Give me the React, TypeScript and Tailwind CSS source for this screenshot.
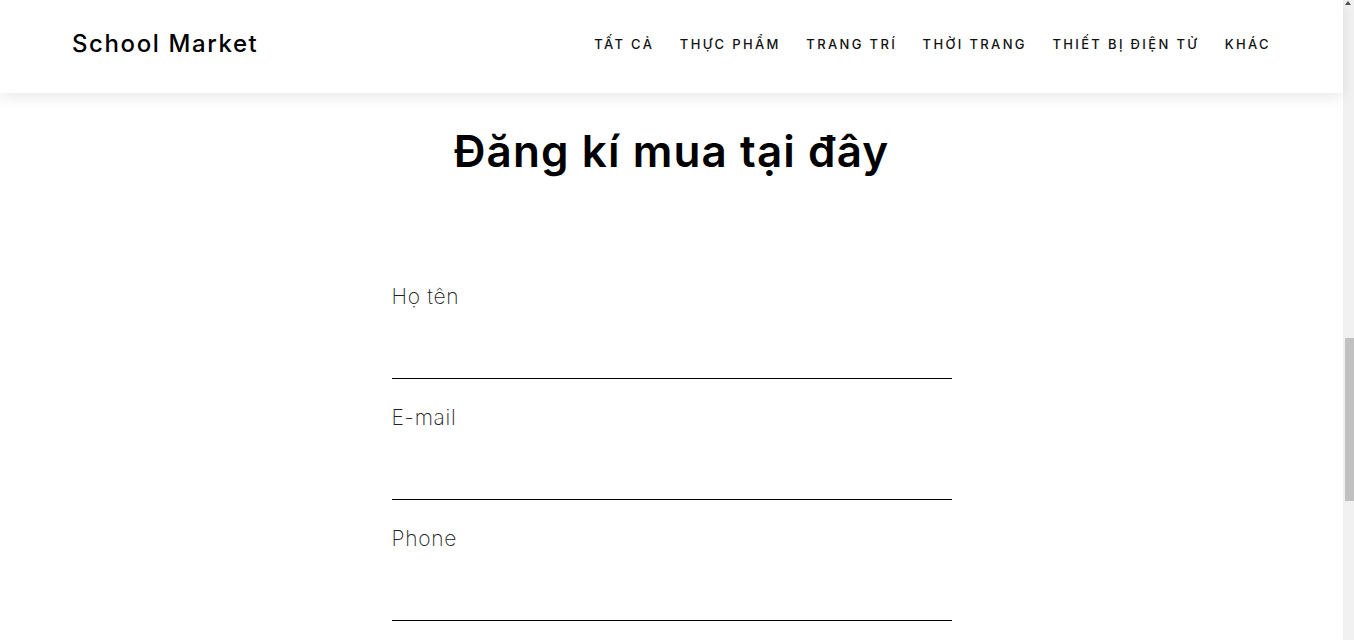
const navItems = ["TẤT CẢ", "THỰC PHẨM", "TRANG TRÍ", "THỜI TRANG", "THIẾT BỊ ĐIỆN TỬ", "KHÁC"];

const fields = ["Họ tên", "E-mail", "Phone"];

function Header() {
  return (
    <header className="relative z-10 flex h-[93px] shrink-0 items-center justify-between bg-white px-[72px] pb-[6px] shadow-[0_4px_14px_rgba(0,0,0,0.09)]">
      <a href="#" className="text-[24px] font-medium leading-8 tracking-[1.6px] text-black">
        School Market
      </a>
      <nav className="flex items-center gap-[25.5px]">
        {navItems.map((item) => (
          <a
            key={item}
            href="#"
            className="text-[13px] font-medium leading-5 tracking-[2.35px] text-[#111]"
          >
            {item}
          </a>
        ))}
      </nav>
    </header>
  );
}

function Field({ label }: { label: string }) {
  return (
    <div className="pt-[27px]">
      <label className="block text-[21px] font-extralight leading-6 tracking-[0.7px] text-[#222]">{label}</label>
      <input type="text" className="block h-[70px] w-full border-b border-black bg-transparent outline-none" />
    </div>
  );
}

export default function App() {
  return (
    <div className="flex h-[640px] overflow-hidden bg-white font-['Inter','Liberation_Sans',sans-serif]">
      <div className="flex min-w-0 flex-1 flex-col">
        <Header />
        <main className="flex flex-col items-center">
          <h1 className="mt-[32px] text-[44px] font-semibold leading-[52px] tracking-[1.1px] text-black">
            Đăng kí mua tại đây
          </h1>
          <form className="mt-[81px] w-[560px]">
            {fields.map((f) => (
              <Field key={f} label={f} />
            ))}
          </form>
        </main>
      </div>
      {/* window scrollbar */}
      <div className="relative w-[11px] shrink-0 bg-[#f1f1f1]">
        <span className="absolute left-[2px] top-[1px] h-0 w-0 border-x-[3.5px] border-b-[4px] border-x-transparent border-b-[#505050]" />
        <div className="absolute left-[2px] right-0 top-[338px] h-[163px] bg-[#c1c1c1]" />
      </div>
    </div>
  );
}
